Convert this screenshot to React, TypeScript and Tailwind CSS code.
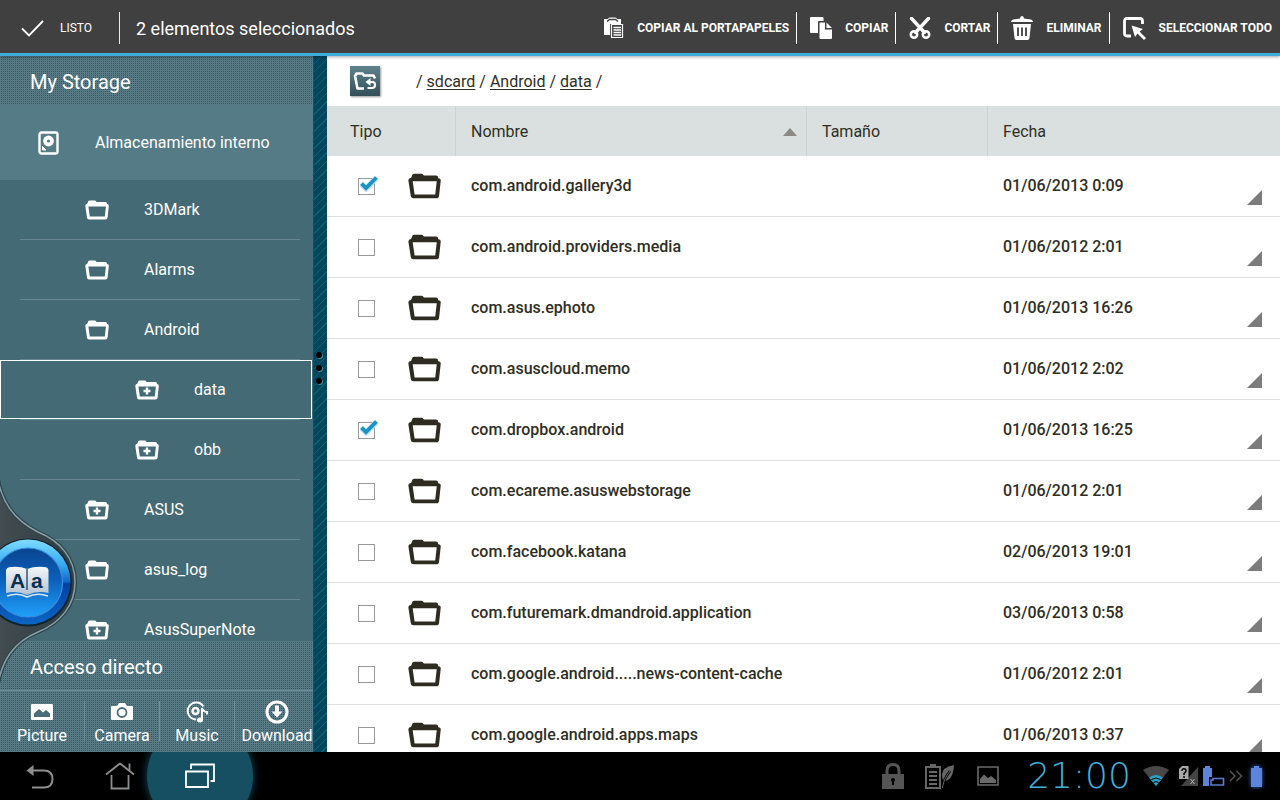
import { useState, type ReactNode } from "react";
import clsx from "clsx";

type TreeItem = {
  name: string;
  plus?: boolean;
  nested?: boolean;
  selected?: boolean;
};

type FileItem = {
  name: string;
  date: string;
  checked?: boolean;
};

const tree: TreeItem[] = [
  { name: "3DMark" },
  { name: "Alarms" },
  { name: "Android" },
  { name: "data", plus: true, nested: true, selected: true },
  { name: "obb", plus: true, nested: true },
  { name: "ASUS", plus: true },
  { name: "asus_log" },
  { name: "AsusSuperNote", plus: true },
];

const files: FileItem[] = [
  { name: "com.android.gallery3d", date: "01/06/2013 0:09", checked: true },
  { name: "com.android.providers.media", date: "01/06/2012 2:01" },
  { name: "com.asus.ephoto", date: "01/06/2013 16:26" },
  { name: "com.asuscloud.memo", date: "01/06/2012 2:02" },
  { name: "com.dropbox.android", date: "01/06/2013 16:25", checked: true },
  { name: "com.ecareme.asuswebstorage", date: "01/06/2012 2:01" },
  { name: "com.facebook.katana", date: "02/06/2013 19:01" },
  { name: "com.futuremark.dmandroid.application", date: "03/06/2013 0:58" },
  { name: "com.google.android.....news-content-cache", date: "01/06/2012 2:01" },
  { name: "com.google.android.apps.maps", date: "01/06/2013 0:37" },
];

// fine dotted texture shared by the sidebar headings and the shortcuts
const dots =
  "bg-[#365661] bg-[linear-gradient(90deg,#587b86_1px,transparent_1px),linear-gradient(#587b86_1px,transparent_1px)] bg-size-[2px_2px]";

export default function App() {
  return (
    <div className="flex h-screen flex-col overflow-hidden bg-black font-['Roboto',sans-serif]">
      <ActionBar />
      <main className="flex min-h-0 flex-1 bg-white">
        <Sidebar />
        <FileList />
      </main>
      <SystemBar />
    </div>
  );
}

function ActionBar() {
  return (
    <header className="relative z-10 flex h-14 shrink-0 items-start justify-between border-b-[3px] border-[#3eacd8] bg-[#404040] pt-3 text-white shadow-[0_1px_3px_rgba(0,0,0,0.35)]">
      <div className="flex h-8 items-center">
        <button className="flex h-8 w-[120px] items-center gap-4 border-r border-white/90 pl-5 text-xs">
          <svg width="24" height="20" viewBox="0 0 24 20" fill="none" stroke="#fff" strokeWidth="1.800">
            <path d="M2 10.500l7 7L23 3" />
          </svg>
          LISTO
        </button>
        <h1 className="pl-4 pt-0.5 text-lg">2 elementos seleccionados</h1>
      </div>
      <div className="flex h-8 items-center pr-2 text-xs font-bold">
        <ActionButton label="COPIAR AL PORTAPAPELES" icon={<ClipboardIcon />} first />
        <ActionButton label="COPIAR" icon={<CopyIcon />} />
        <ActionButton label="CORTAR" icon={<CutIcon />} />
        <ActionButton label="ELIMINAR" icon={<TrashIcon />} />
        <ActionButton label="SELECCIONAR TODO" icon={<SelectIcon />} />
      </div>
    </header>
  );
}

function ActionButton({
  label,
  icon,
  first,
}: {
  label: string;
  icon: ReactNode;
  first?: boolean;
}) {
  return (
    <button
      className={clsx(
        "ml-[7px] flex h-8 items-center gap-[13px] whitespace-nowrap pl-[13px]",
        !first && "border-l border-white",
      )}
    >
      {icon}
      {label}
    </button>
  );
}

function Sidebar() {
  return (
    <>
      <aside className="relative flex w-[313px] shrink-0 flex-col overflow-hidden bg-[#446a75] text-white">
        <h2 className={clsx("flex h-[49px] shrink-0 items-center pl-[30px] pt-0.5 text-xl", dots)}>
          My Storage
        </h2>
        <button className="flex h-[75px] shrink-0 items-center gap-9 bg-[#557b86] pl-[38px] text-base">
          <svg width="21" height="24" viewBox="0 0 21 24" fill="none">
            <rect x="1.500" y="1.500" width="18" height="21" rx="2" stroke="#fff" strokeWidth="2.400" />
            <circle cx="10.500" cy="10" r="5.400" fill="#fff" />
            <circle cx="10.500" cy="10" r="1.600" fill="#557b86" />
            <path d="M4.500 15.500l3.500 3.500H4.500z" fill="#fff" stroke="#fff" />
          </svg>
          Almacenamiento interno
        </button>
        <ul className="min-h-0 flex-1 overflow-hidden">
          {tree.map((item) => (
            <TreeRow key={item.name} item={item} />
          ))}
        </ul>
        <h2 className={clsx("flex h-[50px] shrink-0 items-center border-b border-[#6f929c] pl-[30px] pt-0.5 text-xl", dots)}>
          Acceso directo
        </h2>
        <nav className={clsx("flex h-[61px] shrink-0 items-start pt-2", dots)}>
          <Shortcut label="Picture" width="w-[84px]" icon={<PictureIcon />} />
          <Divider />
          <Shortcut label="Camera" width="w-[74px]" icon={<CameraIcon />} />
          <Divider />
          <Shortcut label="Music" width="w-[74px]" icon={<MusicIcon />} />
          <Divider />
          <Shortcut label="Download" width="w-[84px]" icon={<DownloadIcon />} />
        </nav>
        <DictionaryDock />
      </aside>
      <div className="flex w-3.5 shrink-0 flex-col items-center justify-center gap-[7px] border-l border-[#0b5266] bg-[#00465c] bg-[repeating-linear-gradient(135deg,transparent_0px,transparent_5px,#0a6078_5px,#0a6078_6px)] pb-[72px] pr-[3px]">
        <span className="size-1.5 rounded-full bg-black shadow-[1px_1px_0_#4f8796]" />
        <span className="size-1.5 rounded-full bg-black shadow-[1px_1px_0_#4f8796]" />
        <span className="size-1.5 rounded-full bg-black shadow-[1px_1px_0_#4f8796]" />
      </div>
    </>
  );
}

function TreeRow({ item }: { item: TreeItem }) {
  return (
    <li>
      <button
        className={clsx(
          "flex h-[59px] w-[312px] items-center gap-[35px] border text-base",
          item.nested ? "pl-[134px]" : "pl-[84px]",
          item.selected ? "border-white" : "border-transparent",
        )}
      >
        <svg width="24" height="20" viewBox="0 0 24 20" fill="none">
          <FolderShape color="#fff" />
          {item.plus && <path d="M12 7.500v7M8.500 11h7" stroke="#fff" strokeWidth="2.400" />}
        </svg>
        {item.name}
      </button>
      <div className="ml-5 mr-[13px] h-px bg-[#668791]" />
    </li>
  );
}

function FolderShape({ color }: { color: string }) {
  return (
    <path
      fill={color}
      fillRule="evenodd"
      d="M3 2Q3 .5 4.500 .5H10Q11 .5 11.500 2H20.500Q22 2 22 4Q24 4 23.800 6L22.600 17.500Q22.400 19.500 20.500 19.500H4Q2.200 19.500 2 17.500L.3 6Q.2 4 2.200 3.800ZM3.400 6.400L4.800 16.600H19.800L20.900 6.400Z"
    />
  );
}

function Divider() {
  return <span className="mt-0.5 h-10 w-px shrink-0 bg-[#6f929c]" />;
}

function Shortcut({
  label,
  width,
  icon,
}: {
  label: string;
  width: string;
  icon: ReactNode;
}) {
  return (
    <a href="#" className={clsx("flex shrink-0 flex-col items-center text-base", width)}>
      <span className="flex h-[25px] shrink-0 items-center">{icon}</span>
      {label}
    </a>
  );
}

function DictionaryDock() {
  return (
    <button aria-label="Dictionary" className="absolute bottom-[52px] left-0">
      <svg width="84" height="240" viewBox="0 0 84 240" fill="none">
        <defs>
          <linearGradient id="hump" x1="0" x2="1" y1="0" y2="0">
            <stop offset="0" stopColor="#434d52" />
            <stop offset="1" stopColor="#2d3c42" />
          </linearGradient>
          <linearGradient id="ring" x1="0" x2="0" y1="0" y2="1">
            <stop offset="0" stopColor="#7fdcff" />
            <stop offset="0.3" stopColor="#35aaf0" />
            <stop offset="0.5" stopColor="#1068c8" />
            <stop offset="0.52" stopColor="#0640a0" />
            <stop offset="1" stopColor="#0b66c4" />
          </linearGradient>
          <linearGradient id="disc" x1="0" x2="0" y1="0" y2="1">
            <stop offset="0" stopColor="#0a4590" />
            <stop offset="0.45" stopColor="#0b5fba" />
            <stop offset="1" stopColor="#1fa0f8" />
          </linearGradient>
          <linearGradient id="page" x1="0" x2="0" y1="0" y2="1">
            <stop offset="0" stopColor="#f4f6f8" />
            <stop offset="1" stopColor="#b4c4d4" />
          </linearGradient>
        </defs>
        <path
          d="M-3 14C1 42 14 60 38 72C60 81 75 98 75 122C75 146 60 163 38 172C14 182 1 200 -3 230Z"
          fill="url(#hump)"
          stroke="#2c444c"
          strokeWidth="4"
        />
        <path
          d="M-3 14C1 42 14 60 38 72C60 81 75 98 75 122C75 146 60 163 38 172C14 182 1 200 -3 230"
          stroke="#8b9ea4"
          strokeWidth="1.500"
        />
        <circle cx="28" cy="122.500" r="44" fill="#10242e" />
        <circle cx="28" cy="122" r="42.500" fill="url(#ring)" />
        <circle cx="28" cy="122.500" r="34.500" fill="url(#disc)" stroke="#3b8fe0" strokeWidth="1.200" />
        <path
          d="M6 110Q7 107 11 107Q20 106 27 109Q35 106 44 107Q48 107 48.500 110V133Q37 130 27 135Q17 130 6 133Z"
          fill="url(#page)"
        />
        <path d="M7 136Q18 132 27 137Q37 132 48 136" stroke="#dce6ee" strokeWidth="1.500" />
        <path d="M27 109V130" stroke="#0b2f52" strokeWidth="1.200" />
        <text x="10" y="128" fontSize="21" fontWeight="700" fill="#0b2f52" fontFamily="Liberation Sans">
          A
        </text>
        <text x="31" y="128" fontSize="21" fontWeight="700" fill="#0b2f52" fontFamily="Liberation Sans">
          a
        </text>
      </svg>
    </button>
  );
}

function FileList() {
  const [checked, setChecked] = useState<string[]>(
    files.filter((f) => f.checked).map((f) => f.name),
  );

  const toggle = (name: string) =>
    setChecked((prev) =>
      prev.includes(name) ? prev.filter((n) => n !== name) : [...prev, name],
    );

  return (
    <section className="min-w-0 flex-1 overflow-hidden text-[#2e2e24]">
      <div className="flex h-[50px] items-center gap-9 pl-[23px] text-base">
        <button
          aria-label="Up"
          className="flex size-[30px] items-center justify-center bg-linear-to-b from-[#5f838d] to-[#334f58] shadow-[1px_1px_2px_rgba(0,0,0,0.4)]"
        >
          <svg width="24" height="20" viewBox="0 0 24 20" fill="none" stroke="#fff" strokeWidth="2.600">
            <path d="M11 17.500H4.500L2 5L3.500 2.500H9.500L11 4.500H20.500L22 7.500" strokeLinejoin="round" />
            <path d="M16 11h3.500q2.500 0 2.500 3t-3 3H14.500" strokeWidth="2.200" />
            <path d="M17.500 7v8l-5-4z" fill="#fff" stroke="none" />
          </svg>
        </button>
        <nav className="flex gap-1 pt-0.5">
          <span>/</span>
          <a href="#" className="underline underline-offset-2">sdcard</a>
          <span>/</span>
          <a href="#" className="underline underline-offset-2">Android</a>
          <span>/</span>
          <a href="#" className="underline underline-offset-2">data</a>
          <span>/</span>
        </nav>
      </div>
      <table className="w-full table-fixed border-separate border-spacing-0 text-left text-base">
        <colgroup>
          <col className="w-[129px]" />
          <col />
          <col className="w-[181px]" />
          <col className="w-[292px]" />
        </colgroup>
        <thead>
          <tr className="h-[50px] bg-[#dae0e0]">
            <th className="border-r border-[#cdd2d2] pl-[23px] pt-0.5 font-normal">Tipo</th>
            <th className="border-r border-[#cdd2d2] pl-[15px] pr-[9px] pt-0.5 font-normal">
              <div className="flex items-center justify-between">
                Nombre
                <svg width="14" height="8" viewBox="0 0 14 8">
                  <path d="M0 8L7 0L14 8Z" fill="#8a8a82" />
                </svg>
              </div>
            </th>
            <th className="border-r border-[#cdd2d2] pl-[15px] pt-0.5 font-normal">Tamaño</th>
            <th className="pl-[15px] pt-0.5 font-normal">Fecha</th>
          </tr>
        </thead>
        <tbody>
          {files.map((file) => (
            <tr key={file.name} className="h-[61px] *:border-b *:border-[#dedede]">
              <td className="pl-[31px]">
                <div className="flex items-center gap-[33px]">
                  <label className="relative">
                    <input
                      type="checkbox"
                      aria-label={file.name}
                      checked={checked.includes(file.name)}
                      onChange={() => toggle(file.name)}
                      className="peer block size-[17px] appearance-none border border-[#999] bg-white"
                    />
                    <svg
                      className="absolute -top-1 left-0 hidden peer-checked:block"
                      width="22"
                      height="20"
                      viewBox="0 0 22 20"
                      fill="none"
                    >
                      <path d="M3.500 10L8 14.500L18.500 4" stroke="#b5e3f5" strokeWidth="5.500" />
                      <path d="M3.500 9.500L8 14L18.500 3.500" stroke="#1b93c4" strokeWidth="3.800" />
                    </svg>
                  </label>
                  <svg width="33" height="26" viewBox="0 0 24 20" preserveAspectRatio="none">
                    <FolderShape color="#2e2c20" />
                  </svg>
                </div>
              </td>
              <td className="truncate pl-[15px] font-medium">{file.name}</td>
              <td />
              <td className="pl-[15px] font-medium">
                <div className="flex h-[60px] items-center justify-between pr-[18px]">
                  {file.date}
                  <button aria-label="Menu" className="mb-[11px] self-end">
                    <svg width="15" height="15" viewBox="0 0 15 15" className="block">
                      <path d="M15 0V15H0Z" fill="#7c7c7c" />
                    </svg>
                  </button>
                </div>
              </td>
            </tr>
          ))}
        </tbody>
      </table>
    </section>
  );
}

function SystemBar() {
  return (
    <footer className="flex h-12 shrink-0 items-center justify-between overflow-hidden bg-black">
      <div className="flex h-12 items-center">
        <button aria-label="Back" className="flex w-20 justify-center">
          <svg width="28" height="26" viewBox="0 0 28 26" fill="none" stroke="#8e8e8e" strokeWidth="2">
            <path d="M7 7.500H18Q26.500 7.500 26.500 16T18 24.500H6" />
            <path d="M7.500 2v11L.5 7.500z" fill="#8e8e8e" stroke="none" />
          </svg>
        </button>
        <button aria-label="Home" className="flex w-20 justify-center">
          <svg width="30" height="28" viewBox="0 0 30 28" fill="none" stroke="#8e8e8e" strokeWidth="1.800">
            <path d="M1 12.500L15 1.500L29 12.500M24.500 9V1.500" />
            <path d="M6.500 13V26.500H23.500V13" />
          </svg>
        </button>
        <button
          aria-label="Recent"
          className="-ml-[13px] flex size-[106px] items-center justify-center rounded-full bg-[#164e62] shadow-[0_0_8px_#164e62]"
        >
          <svg width="30" height="26" viewBox="0 0 30 26" fill="none" stroke="#fff" strokeWidth="1.800">
            <path d="M1 8.500H23V24H1Z" />
            <path d="M6 6V1.500H29V18H25.500" />
          </svg>
        </button>
      </div>
      <div className="flex h-12 items-center pr-[17px]">
        <svg width="24" height="28" viewBox="0 0 24 28" fill="none" className="mr-5">
          <path d="M6 13V8.500Q6 2.500 12 2.500T18 8.500V13" stroke="#555" strokeWidth="3" />
          <path d="M1 12H23V27H1Z" fill="#555" />
          <circle cx="12" cy="18" r="2" fill="#000" />
          <path d="M12 18v5" stroke="#000" strokeWidth="2" />
        </svg>
        <svg width="30" height="26" viewBox="0 0 30 26" fill="none" className="mr-[22px]">
          <path d="M1 4H15V25H1Z" stroke="#666" strokeWidth="2" />
          <path d="M5 2H11M4 9H12M4 13H12M4 17H12M4 21H12" stroke="#666" strokeWidth="2" />
          <path d="M29 2Q17 4 17 12Q17 16 19 18Q28 18 29 2Z" fill="#666" />
          <path d="M17.500 25Q18 17 25 8" stroke="#000" strokeWidth="2.500" />
          <path d="M17.500 25Q18 17 25 8" stroke="#666" />
        </svg>
        <svg width="22" height="20" viewBox="0 0 22 20" fill="none" className="mr-5">
          <path d="M1 1H21V19H1Z" stroke="#6a6a6a" strokeWidth="1.600" />
          <path d="M3 17V13L7 8.500L11 12L14 10L19 14V17Z" fill="#6a6a6a" />
        </svg>
        <time className="w-[120px] text-center font-['DejaVu_Sans',sans-serif] text-4xl font-extralight leading-none text-[#3fb0dc]">
          21:00
        </time>
        <svg width="26" height="20" viewBox="0 0 26 20" fill="none" className="ml-1">
          <path d="M0 4Q13 -4 26 4L13 20Z" fill="#484848" />
          <path d="M6 11.500Q13 6.500 20 11.500L13 20Z" fill="#2f9fc8" />
          <path d="M8.500 13.500Q13 10.500 17.500 13.500M10.500 16.500Q13 14.500 15.500 16.500" stroke="#000" />
        </svg>
        <svg width="20" height="22" viewBox="0 0 20 22" fill="none" className="ml-2.5">
          <path d="M19 2V21H2Z" fill="#444" />
          <path d="M3 1H9.500V14H0V4Z" fill="#a8a8a8" />
          <path d="M3 6Q3 3.800 5 3.800T7 6Q7 7 5 8.500V10M5 11v2" stroke="#000" strokeWidth="1.500" />
          <path d="M11.500 14l4 5M15.500 14l-4 5" stroke="#bbb" />
        </svg>
        <svg width="22" height="22" viewBox="0 0 22 22" fill="none" className="ml-1">
          <path d="M0 3H2V1H7V3H9V12H6V21H0Z" fill="#5c84dc" />
          <path d="M8 15H10V13.500H20.500V20H8Z" fill="#000" stroke="#5c7cc8" strokeWidth="1.600" />
        </svg>
        <svg width="14" height="12" viewBox="0 0 14 12" fill="none" stroke="#505050" strokeWidth="1.600" className="ml-1">
          <path d="M1 1l5 5-5 5M7.500 1l5 5-5 5" />
        </svg>
        <svg width="12" height="22" viewBox="0 0 12 22" className="ml-2 drop-shadow-[0_0_2px_#3c66d0]">
          <path d="M0 3H3V1H8V3H11V22H0Z" fill="#5c84dc" />
        </svg>
      </div>
    </footer>
  );
}

function ClipboardIcon() {
  return (
    <svg width="20" height="22" viewBox="0 0 20 22" fill="none">
      <path d="M0 2H4Q4 .5 6 .5H11Q13 .5 13 2H17V7H6V18H0Z" fill="#fff" />
      <path d="M3 4.500L5.500 2.500H11.500L14 4.500" stroke="#404040" strokeWidth="1.400" />
      <path d="M7.500 7.500H18.500V20.500H7.500Z" fill="#404040" stroke="#fff" strokeWidth="1.200" />
      <path d="M9.500 10.500H17M9.500 13H17M9.500 15.500H17M9.500 18H17" stroke="#fff" strokeWidth="1.300" />
    </svg>
  );
}

function CopyIcon() {
  return (
    <svg width="22" height="22" viewBox="0 0 22 22" fill="#fff">
      <path d="M1 0H12.500Q13.500 0 13.500 1V4H9Q8 4 8 5V16H1Q0 16 0 15V1Q0 0 1 0Z" />
      <path d="M10.500 5.500H15V12.500H22V21Q22 22 21 22H10.500Q9.500 22 9.500 21V6.500Q9.500 5.500 10.500 5.500Z" />
      <path d="M16.500 5.500L22 11H16.500Z" />
    </svg>
  );
}

function CutIcon() {
  return (
    <svg width="22" height="22" viewBox="0 0 22 22" fill="none" stroke="#fff">
      <path d="M2.500 1.500L15.500 15.500M19.500 1.500L6.500 15.500" strokeWidth="3.400" strokeLinecap="round" />
      <circle cx="5" cy="17.500" r="3.200" strokeWidth="2.500" />
      <circle cx="17" cy="17.500" r="3.200" strokeWidth="2.500" />
    </svg>
  );
}

function TrashIcon() {
  return (
    <svg width="22" height="24" viewBox="0 0 22 24" fill="none">
      <path d="M0 6Q0 3 6 3L9 2.500Q9 0 11 0T13 2.500L16 3Q22 3 22 6Z" fill="#fff" />
      <path d="M2 8H20L18.500 22Q18.300 24 16.500 24H5.500Q3.700 24 3.500 22Z" fill="#fff" />
      <path d="M7 11.500V20M11 11.500V20M15 11.500V20" stroke="#404040" strokeWidth="1.800" />
    </svg>
  );
}

function SelectIcon() {
  return (
    <svg width="23" height="23" viewBox="0 0 23 23" fill="none">
      <path d="M8 19H4Q1.500 19 1.500 16.500V4Q1.500 1.500 4 1.500H17Q19.500 1.500 19.500 4V7" stroke="#fff" strokeWidth="2.800" />
      <path d="M8.500 8.500L20 12L16.500 14.500L23 21L21 23L14.500 16.500L12 20Z" fill="#fff" />
    </svg>
  );
}

function PictureIcon() {
  return (
    <svg width="22" height="16" viewBox="0 0 22 16">
      <rect width="22" height="16" rx="1" fill="#fff" />
      <path d="M3 13V9.500L8 5L12 8.500L15 6L19 9.500V13Z" fill="#4a6e79" />
    </svg>
  );
}

function CameraIcon() {
  return (
    <svg width="22" height="17" viewBox="0 0 22 17" fill="none">
      <path d="M1 3H6L8 0H14L16 3H21Q22 3 22 4V16Q22 17 21 17H1Q0 17 0 16V4Q0 3 1 3Z" fill="#fff" />
      <circle cx="11" cy="9.500" r="4.500" stroke="#4a6e79" strokeWidth="1.800" />
    </svg>
  );
}

function MusicIcon() {
  return (
    <svg width="22" height="22" viewBox="0 0 22 22" fill="none">
      <path d="M17.500 5.500A8.500 8.500 0 1 0 10 18.500" stroke="#fff" strokeWidth="2" />
      <circle cx="9.500" cy="10" r="3" stroke="#fff" strokeWidth="2.500" />
      <path d="M16 18.500V7Q17 10.500 21 11V13.500" stroke="#fff" strokeWidth="2" />
      <ellipse cx="14" cy="19" rx="3" ry="2.500" fill="#fff" />
    </svg>
  );
}

function DownloadIcon() {
  return (
    <svg width="24" height="24" viewBox="0 0 24 24" fill="none">
      <circle cx="12" cy="12" r="10" stroke="#fff" strokeWidth="3" />
      <path d="M10 5.500H14V11.500H17.500L12 17.500L6.500 11.500H10Z" fill="#fff" />
    </svg>
  );
}
